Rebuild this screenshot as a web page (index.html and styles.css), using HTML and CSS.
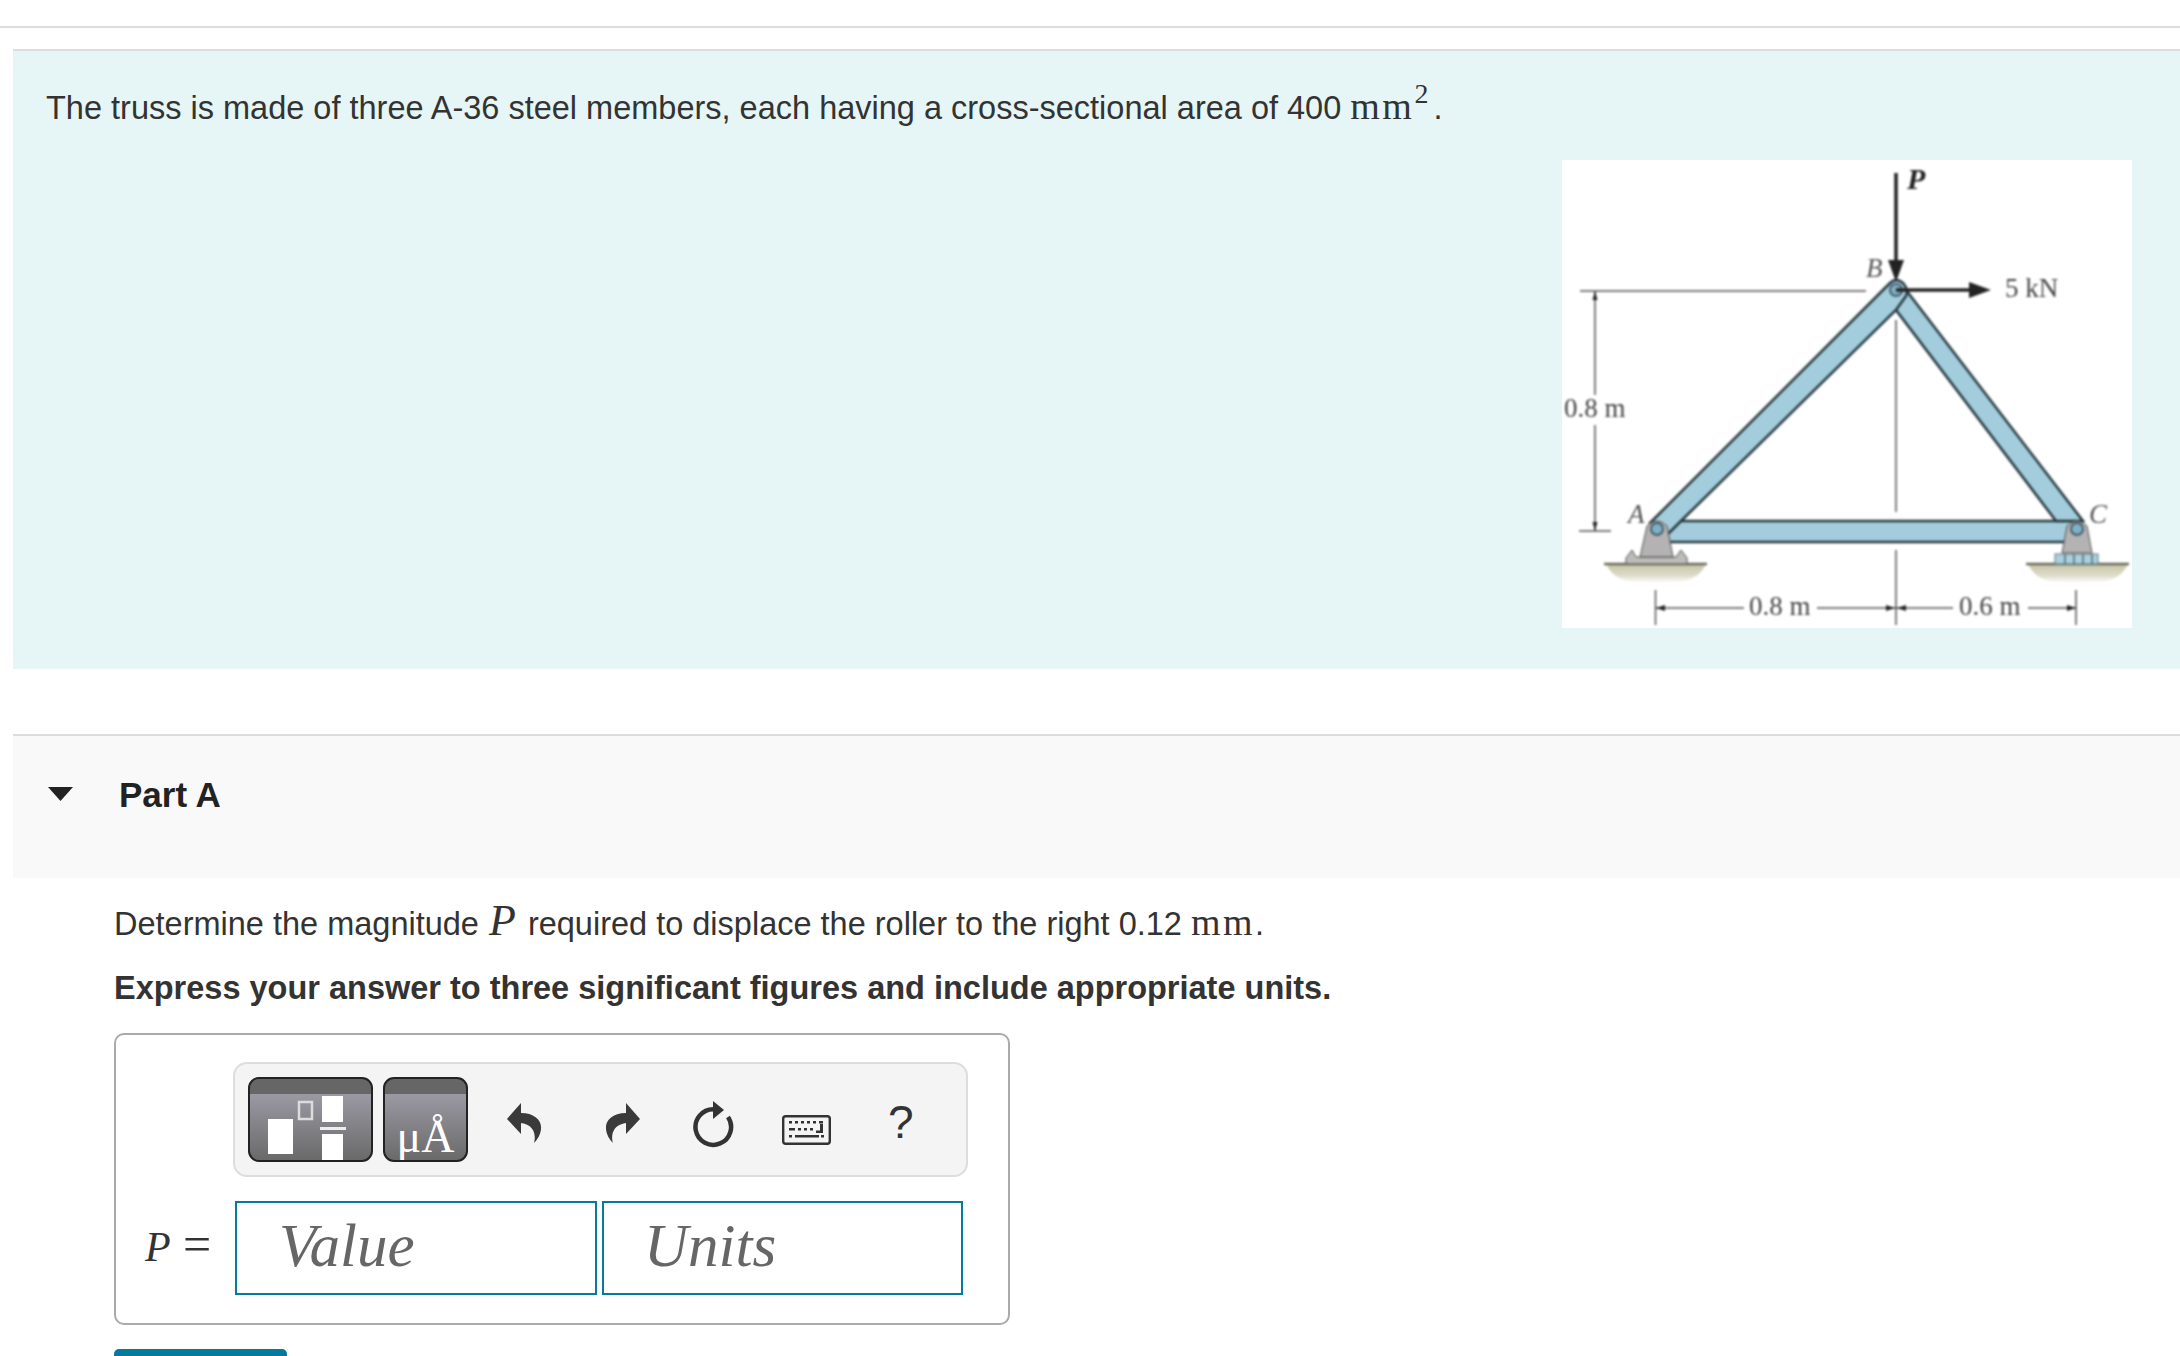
FILE: index.html
```html
<!DOCTYPE html>
<html lang="en">
<head>
    <meta charset="UTF-8">
    <title>Part A</title>
    <link rel="stylesheet" href="styles.css">
</head>
<body>
    <div class="top-rule"></div>

    <section class="intro">
        <p class="intro-text">The truss is made of three A-36 steel members, each having a cross-sectional area of 400 <span class="unit">mm</span><sup class="power">2</sup><span class="stop">.</span></p>
        <svg class="truss" viewBox="0 0 570 468" width="570" height="468">
            <defs>
                <linearGradient id="groundShade" x1="0" y1="0" x2="0" y2="1">
                    <stop offset="0" stop-color="#c6c4a6"/>
                    <stop offset="0.6" stop-color="#dedcc9"/>
                    <stop offset="1" stop-color="#ffffff"/>
                </linearGradient>
            </defs>
            <g class="truss-art">
                <!-- dimension lines -->
                <g class="thin">
                    <path d="M18 131H304M33 131V235M33 265V371M17 371H49"/>
                    <path d="M334 160V352M334 390V465M93.500 430V465M514 430V465"/>
                    <path d="M94 448H182M255 448H391M466 448H514"/>
                </g>
                <path class="head" d="M33 131l-2.500 9h5zM33 371l-2.500 -9h5zM94 448l9 -3v6zM333 448l-9 -3v6zM335 448l9 -3v6zM514 448l-9 -3v6z"/>

                <!-- ground -->
                <path d="M44 404H144C136 420 124 423 94 423S52 420 44 404Z" fill="url(#groundShade)"/>
                <path d="M466 404H566C558 420 546 423 516 423S474 420 466 404Z" fill="url(#groundShade)"/>
                <path class="ground" d="M42 404H145M464 404H567"/>

                <!-- members -->
                <path class="member" d="M104 361H517L504 382H104Z"/>
                <path class="member" d="M344 130L521 361H494L334 150Z"/>
                <path class="member" d="M88 363L328 123Q334 117 341 123Q347 130 344 136L334 150L119 361L104 376Z"/>

                <!-- supports -->
                <path class="plate" d="M64 404V398L70 390L74 397H114L119 390L125 398V404Z"/>
                <path class="support" d="M85 366Q95 356 105 366L111 397H78Z"/>
                <circle class="pin" cx="95" cy="369" r="6"/>
                <path class="support" d="M505 366Q515 356 525 366L530 393H500Z"/>
                <rect class="rollers" x="493" y="394" width="43" height="10"/>
                <path class="roller-gaps" d="M503 394V404M512 394V404M521 394V404M530 394V404"/>
                <circle class="pin" cx="515" cy="369" r="6"/>
                <circle class="pin" cx="334" cy="130" r="6"/>

                <!-- loads -->
                <path class="load" d="M334 13V105M334 130H410"/>
                <path class="head" d="M326 100H342L334 122ZM407 122L429 130L407 138Z"/>

                <text class="label" x="2" y="257">0.8 m</text>
                <text class="label" x="187" y="455">0.8 m</text>
                <text class="label" x="397" y="455">0.6 m</text>
                <text class="label" x="443" y="137">5 kN</text>
                <text class="name name-p" x="345" y="29">P</text>
                <text class="name" x="304" y="117">B</text>
                <text class="name" x="66" y="363">A</text>
                <text class="name" x="527" y="363">C</text>
            </g>
        </svg>
    </section>

    <section class="part-head">
        <svg class="caret" viewBox="0 0 25 14" width="25" height="14"><path d="M0 0H25L12.500 14Z"/></svg>
        <h2 class="part-title">Part A</h2>
    </section>

    <div class="part-body">
        <p class="prompt">Determine the magnitude <span class="math-var">P</span> required to displace the roller to the right 0.12 <span class="unit">mm</span>.</p>
        <p class="instruction">Express your answer to three significant figures and include appropriate units.</p>

        <div class="answer-box">
            <div class="toolbar">
                <div class="tool-btn tool-btn-wide">
                    <svg viewBox="0 0 121 81" width="121" height="81">
                        <rect x="18" y="40" width="25" height="35" fill="#fff"/>
                        <rect x="49" y="23" width="13" height="17" fill="none" stroke="#dcdcdc" stroke-width="2.500"/>
                        <rect x="72" y="17" width="21" height="26" fill="#fff"/>
                        <rect x="70" y="48" width="26" height="3" fill="#eee"/>
                        <rect x="72" y="55" width="21" height="26" fill="#fff"/>
                    </svg>
                </div>
                <div class="tool-btn tool-btn-unit">μÅ</div>
                <svg class="icon icon-undo" viewBox="0 0 35 40" width="35" height="40"><path d="M0 16L14 0V10C27 10 35 17 34 26C33.500 32 30 37 27 40C29 33 28 22 14 20V31Z"/></svg>
                <svg class="icon icon-redo" viewBox="0 0 35 40" width="35" height="40"><path d="M35 16L21 0V10C8 10 0 17 1 26C1.500 32 5 37 8 40C6 33 7 22 21 20V31Z"/></svg>
                <svg class="icon icon-reset" viewBox="0 0 44 48" width="44" height="48">
                    <path d="M21.500 8.200A17.800 17.800 0 1 0 36 16" fill="none" stroke="#333" stroke-width="4.500"/>
                    <path d="M21 0L32 9L21 18Z" fill="#333"/>
                </svg>
                <svg class="icon icon-keys" viewBox="0 0 49 30" width="49" height="30">
                    <rect x="1.200" y="1.200" width="46.600" height="27.600" rx="2.500" fill="none" stroke="#333" stroke-width="2.400"/>
                    <path d="M7 6h3v2.500h-3zM13 6h3v2.500h-3zM19 6h3v2.500h-3zM25 6h3v2.500h-3zM31 6h3v2.500h-3zM37 6h4v2.500h-4zM7 13h6v2.500h-6zM16 13h3v2.500h-3zM22 13h3v2.500h-3zM28 13h3v2.500h-3zM38 9h3v9h-7v-2.500h4zM7 20h3v2.500h-3zM13 20h24v2.500h-24zM39 20h3v2.500h-3z" fill="#333"/>
                </svg>
                <span class="help">?</span>
            </div>
            <div class="answer-row">
                <span class="answer-label"><i class="answer-var">P</i><span class="answer-eq">=</span></span>
                <div class="field">Value</div>
                <div class="field field-units">Units</div>
            </div>
        </div>

        <button class="submit" aria-label="Submit"></button>
    </div>
</body>
</html>
```

FILE: styles.css
```css
html, body {
    height: 1356px;
    overflow: hidden;
}
body {
    margin: 0;
    background: #fff;
    font-family: "Liberation Sans", Arial, sans-serif;
    color: #333;
}
.top-rule {
    margin-top: 26px;
    border-top: 2px solid #ddd;
}

/* problem statement */
.intro {
    display: flex;
    flex-direction: column;
    height: 618px;
    margin: 21px 0 0 13px;
    padding: 0 48px 0 33px;
    border-top: 2px solid #ddd;
    background: #e6f6f6;
}
.intro-text {
    margin: 0;
    padding-top: 35px;
    font-size: 32.500px;
    line-height: 44px;
}
.unit {
    font-family: "Liberation Serif", serif;
    font-size: 38px;
    line-height: 0;
    letter-spacing: 2.500px;
}
.power {
    font-family: "Liberation Serif", serif;
    font-size: 28px;
    line-height: 0;
    vertical-align: 16px;
}
.stop {
    margin-left: 5px;
}
.truss {
    display: block;
    align-self: flex-end;
    margin-top: 30px;
    background: #fff;
}
.truss-art {
    filter: blur(0.8px);
}
.thin path {
    fill: none;
    stroke: #555;
    stroke-width: 1.500;
}
.head {
    fill: #222;
}
.ground {
    fill: none;
    stroke: #6c6b5e;
    stroke-width: 2.500;
}
.member {
    fill: #a3cddd;
    stroke: #26383f;
    stroke-width: 2.500;
}
.support {
    fill: #b4b2b2;
    stroke: #555;
    stroke-width: 1;
}
.plate {
    fill: #bdbcb8;
    stroke: #555;
    stroke-width: 1;
}
.pin {
    fill: #7fb0c6;
    stroke: #46606c;
    stroke-width: 2;
}
.rollers {
    fill: #a9d0de;
    stroke: #607a85;
    stroke-width: 1;
}
.roller-gaps {
    stroke: #5b6a70;
    stroke-width: 1.500;
}
.load {
    fill: none;
    stroke: #222;
    stroke-width: 3.500;
}
.label {
    font-family: "Liberation Serif", serif;
    font-size: 27px;
    fill: #444;
}
.name {
    font-family: "Liberation Serif", serif;
    font-style: italic;
    font-size: 27px;
    fill: #555;
}
.name-p {
    font-size: 30px;
    font-weight: bold;
    fill: #222;
}

/* part header */
.part-head {
    display: flex;
    align-items: center;
    height: 118px;
    padding-bottom: 24px;
    margin: 65px 0 0 13px;
    border-top: 2px solid #ddd;
    background: #f9f9f9;
}
.caret {
    margin-left: 35px;
    margin-bottom: 2px;
    fill: #222;
}
.part-title {
    margin: 0 0 0 46px;
    font-size: 35px;
    font-weight: bold;
    color: #222;
}

/* question */
.part-body {
    padding: 21px 0 0 114px;
}
.prompt {
    margin: 0;
    font-size: 32.500px;
    line-height: 50px;
}
.math-var {
    margin: 0 3px 0 1px;
    font-family: "Liberation Serif", serif;
    font-style: italic;
    font-size: 44px;
    line-height: 0;
}
.instruction {
    margin: 14px 0 0;
    font-size: 32.500px;
    font-weight: bold;
    line-height: 50px;
}

/* answer box */
.answer-box {
    box-sizing: border-box;
    width: 896px;
    height: 292px;
    margin-top: 20px;
    padding: 27px 0 0 117px;
    border: 2px solid #aaa;
    border-radius: 10px;
}
.toolbar {
    box-sizing: border-box;
    display: flex;
    align-items: flex-start;
    width: 735px;
    height: 115px;
    padding-top: 13px;
    padding-left: 13px;
    border: 2px solid #ddd;
    border-radius: 14px;
    background: #f4f4f4;
}
.tool-btn {
    box-sizing: border-box;
    height: 85px;
    border: 2px solid #222;
    border-radius: 11px;
    background: linear-gradient(#666 0, #666 15px, #9b99a3 15px, #6a6a6a 100%);
    overflow: hidden;
}
.tool-btn-wide {
    width: 125px;
}
.tool-btn-wide svg {
    display: block;
}
.tool-btn-unit {
    display: flex;
    align-items: flex-end;
    justify-content: center;
    width: 85px;
    margin-left: 10px;
    font-family: "Liberation Serif", serif;
    font-size: 46px;
    line-height: 46px;
    color: #fff;
}
.icon {
    display: block;
    flex: none;
    fill: #3a3a3a;
}
.icon-undo {
    margin: 26px 0 0 39px;
}
.icon-redo {
    margin: 26px 0 0 63px;
}
.icon-reset {
    margin: 24px 0 0 52px;
}
.icon-keys {
    margin: 38px 0 0 46px;
}
.help {
    margin: 20px 0 0 57px;
    font-size: 46px;
    line-height: 50px;
    color: #333;
}
.answer-row {
    display: flex;
    align-items: center;
    margin: 24px 0 0 -88px;
}
.answer-label {
    display: flex;
    align-items: baseline;
    width: 90px;
    flex: none;
    margin-top: -3px;
    font-family: "Liberation Serif", serif;
    font-size: 42px;
}
.answer-var {
    width: 38px;
}
.answer-eq {
    font-size: 50px;
    line-height: 40px;
}
.field {
    box-sizing: border-box;
    width: 362px;
    height: 94px;
    padding-left: 42px;
    border: 2px solid #047a9c;
    background: #fff;
    font-family: "Liberation Serif", serif;
    font-style: italic;
    font-size: 61px;
    line-height: 85px;
    color: #666;
}
.field-units {
    width: 361px;
    margin-left: 5px;
    padding-left: 40px;
}
.submit {
    display: block;
    width: 173px;
    height: 46px;
    margin-top: 24px;
    border: 0;
    border-radius: 5px;
    background: #047a9c;
}
```
